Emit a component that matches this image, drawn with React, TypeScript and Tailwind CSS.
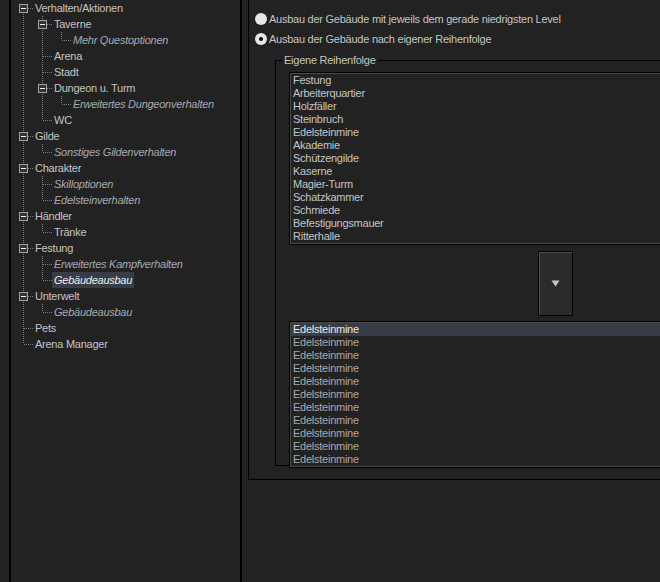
import React from 'react'

type TreeNode = { label: string; italic?: boolean; selected?: boolean; children?: TreeNode[] }

const tree: TreeNode[] = [
  {
    label: 'Verhalten/Aktionen',
    children: [
      { label: 'Taverne', children: [{ label: 'Mehr Questoptionen', italic: true }] },
      { label: 'Arena' },
      { label: 'Stadt' },
      { label: 'Dungeon u. Turm', children: [{ label: 'Erweitertes Dungeonverhalten', italic: true }] },
      { label: 'WC' },
    ],
  },
  { label: 'Gilde', children: [{ label: 'Sonstiges Gildenverhalten', italic: true }] },
  {
    label: 'Charakter',
    children: [
      { label: 'Skilloptionen', italic: true },
      { label: 'Edelsteinverhalten', italic: true },
    ],
  },
  { label: 'Händler', children: [{ label: 'Tränke' }] },
  {
    label: 'Festung',
    children: [
      { label: 'Erweitertes Kampfverhalten', italic: true },
      { label: 'Gebäudeausbau', italic: true, selected: true },
    ],
  },
  { label: 'Unterwelt', children: [{ label: 'Gebäudeausbau', italic: true }] },
  { label: 'Pets' },
  { label: 'Arena Manager' },
]

const order = [
  'Festung', 'Arbeiterquartier', 'Holzfäller', 'Steinbruch', 'Edelsteinmine', 'Akademie',
  'Schützengilde', 'Kaserne', 'Magier-Turm', 'Schatzkammer', 'Schmiede', 'Befestigungsmauer', 'Ritterhalle',
]

type Row = { node: TreeNode; level: number; last: boolean; first: boolean; parentsLast: boolean[] }

function flatten(nodes: TreeNode[], level = 0, parentsLast: boolean[] = [], out: Row[] = []) {
  nodes.forEach((n, i) => {
    const last = i === nodes.length - 1
    out.push({ node: n, level, last, first: level === 0 && i === 0, parentsLast })
    if (n.children) flatten(n.children, level + 1, [...parentsLast, last], out)
  })
  return out
}

const DOT = '#7c7c7c'

// one 19px column of the tree's dotted guide lines
function Cell({ kind, row }: { kind: 'pipe' | 'blank' | 'node'; row?: Row }) {
  return (
    <svg width="19" height="16" className="shrink-0 block" shapeRendering="crispEdges">
      {kind === 'pipe' && <line x1="9.5" y1="0" x2="9.5" y2="16" stroke={DOT} strokeDasharray="1 1" />}
      {kind === 'node' && row && (
        <>
          {!row.first && <line x1="9.5" y1="0" x2="9.5" y2="8" stroke={DOT} strokeDasharray="1 1" />}
          {!row.last && <line x1="9.5" y1="8" x2="9.5" y2="16" stroke={DOT} strokeDasharray="1 1" />}
          <line x1="10" y1="8.5" x2="19" y2="8.5" stroke={DOT} strokeDasharray="1 1" />
          {row.node.children && (
            <>
              <rect x="5.5" y="4.5" width="8" height="8" fill="#30333a" stroke="#a4a4a4" />
              <line x1="7" y1="8.5" x2="12" y2="8.5" stroke="#f0f0f0" />
            </>
          )}
        </>
      )}
    </svg>
  )
}

function Listbox({ items, dim, selected, className }: { items: string[]; dim?: boolean; selected?: number; className: string }) {
  return (
    <div className={`border border-black bg-[#222222] shadow-[inset_1px_1px_0_#4a4a4a,inset_-1px_-1px_0_#4a4a4a] pt-[1px] pl-[1px] ${className}`}>
      {items.map((it, i) => (
        <div
          key={i}
          className={`h-[13px] leading-[13px] pl-[2px] whitespace-nowrap ${
            i === selected ? 'bg-[#383c46] text-[#e8e8e8]' : dim ? 'text-[#a8a8a8]' : 'text-[#c4c4c4]'
          }`}
        >
          {it}
        </div>
      ))}
    </div>
  )
}

function Radio({ checked, label }: { checked?: boolean; label: string }) {
  return (
    <div className="flex items-center h-5 pl-[6px]">
      <span className="w-3 h-3 rounded-full bg-[#e6e6e6] flex items-center justify-center shrink-0">
        {checked && <span className="w-1 h-1 rounded-full bg-black" />}
      </span>
      <span className="ml-[2px] text-[#c4c4c4] whitespace-nowrap">{label}</span>
    </div>
  )
}

export default function App() {
  const rows = flatten(tree)
  return (
    <div
      className="w-[660px] h-[582px] bg-[#222222] flex overflow-hidden text-[11px] tracking-[-0.25px]"
      style={{ fontFamily: '"Liberation Sans", Arial, sans-serif' }}
    >
      {/* left tree */}
      <div className="w-[242px] shrink-0 pl-[9px] h-full">
        <div className="h-full border-x-2 border-black pl-[3px]">
          {rows.map((r, i) => (
            <div key={i} className="flex h-4 items-center">
              {r.parentsLast.map((pl, d) => (
                <Cell key={d} kind={pl ? 'blank' : 'pipe'} />
              ))}
              <Cell kind="node" row={r} />
              <span
                className={`h-4 leading-4 px-[2px] whitespace-nowrap ${r.node.italic ? 'italic text-[#a6a9b0]' : 'text-[#c4c4c4]'} ${
                  r.node.selected ? 'bg-[#383c46] text-[#eeeeee]' : ''
                }`}
              >
                {r.node.label}
              </span>
            </div>
          ))}
        </div>
      </div>

      {/* right content */}
      <div className="flex-1 min-w-0">
        <div className="relative ml-[6px] mt-[-6px] w-[460px] h-[486px] border border-black">
          <span className="absolute left-[8px] top-[-5px] px-[1px] leading-[13px] bg-[#222222] text-[#c4c4c4]">Gebäudeausbau</span>
          <div className="pt-[14px]">
            <Radio label="Ausbau der Gebäude mit jeweils dem gerade niedrigsten Level" />
            <Radio checked label="Ausbau der Gebäude nach eigener Reihenfolge" />
          </div>
          <div className="relative ml-[26px] mt-[11px] h-[406px] border border-black">
            <span className="absolute left-[6px] top-[-7px] px-[2px] leading-[13px] bg-[#222222] text-[#c4c4c4]">
              Eigene Reihenfolge
            </span>
            <div className="pl-[13px] pt-[11px] flex flex-col">
              <Listbox items={order} className="h-[173px] w-[520px]" />
              <button className="mt-[6px] ml-[249px] w-[35px] h-[65px] border border-black bg-[#2b2b2b] shadow-[inset_1px_1px_0_#4e4e4e] flex items-center justify-center">
                <svg width="9" height="7" viewBox="0 0 9 7">
                  <path d="M0.5 0.5 H8.5 L4.5 6.5 Z" fill="#c8c8c8" />
                </svg>
              </button>
              <Listbox
                items={Array.from({ length: 11 }, () => 'Edelsteinmine')}
                dim
                selected={0}
                className="mt-[5px] h-[147px] w-[520px] relative"
              />
            </div>
          </div>
        </div>
      </div>
    </div>
  )
}
